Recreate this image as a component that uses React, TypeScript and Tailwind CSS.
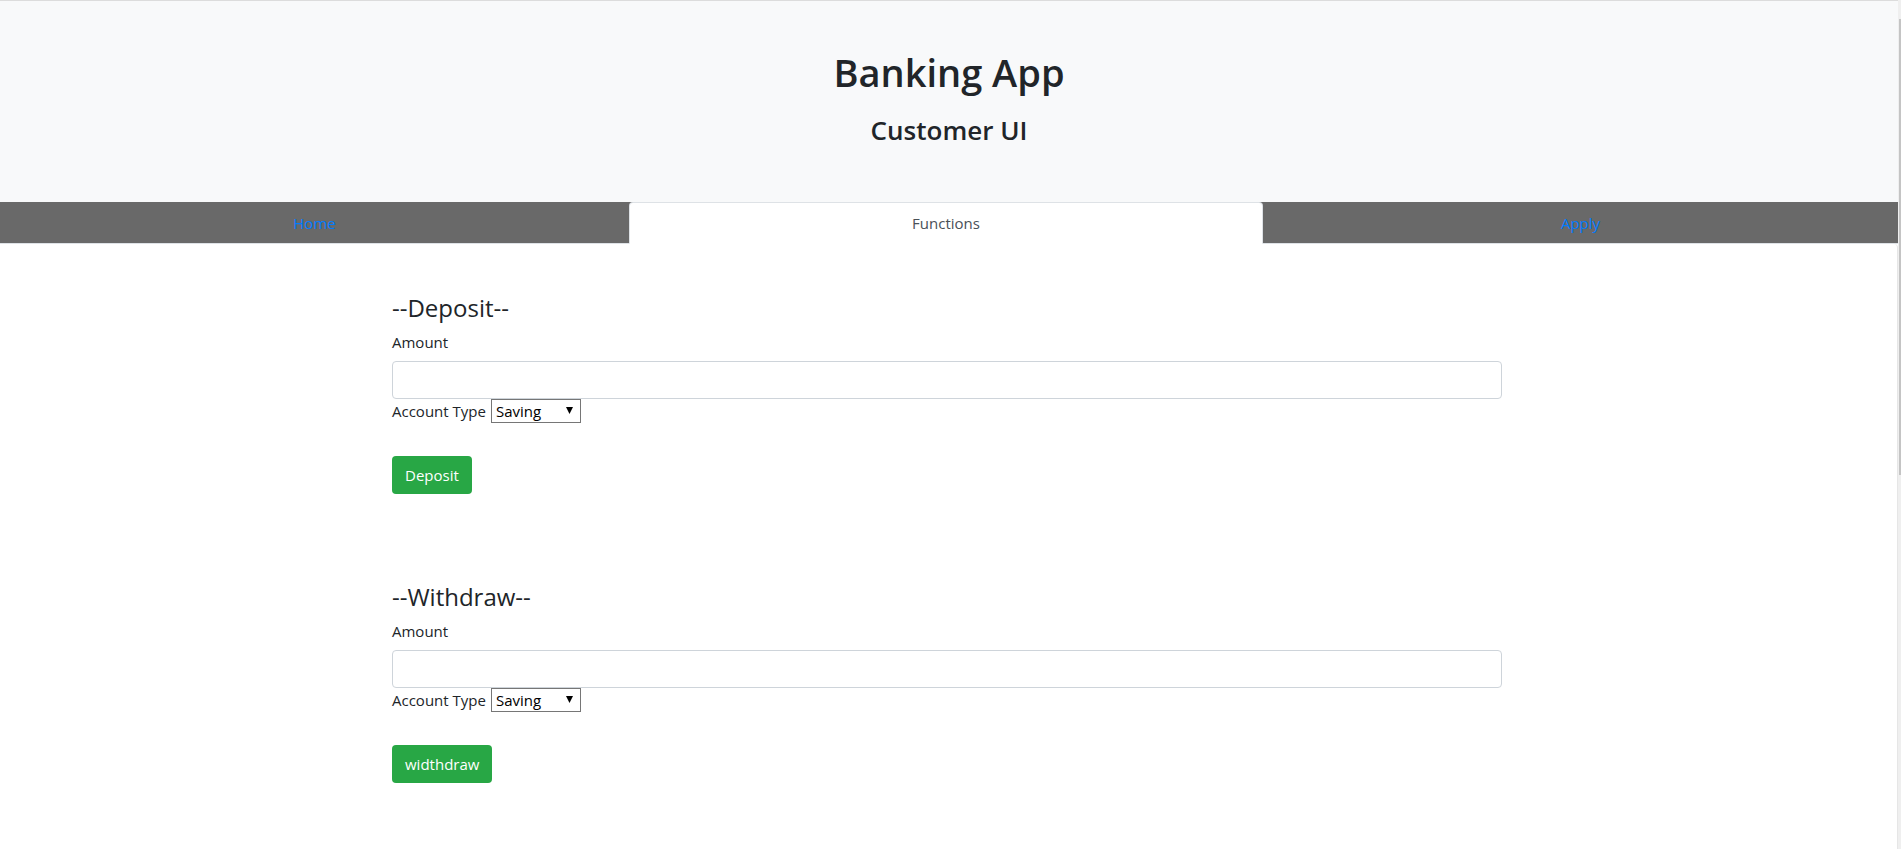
import { useState } from 'react';

type Tab = 'home' | 'functions' | 'apply';

const TABS: { id: Tab; label: string }[] = [
  { id: 'home', label: 'Home' },
  { id: 'functions', label: 'Functions' },
  { id: 'apply', label: 'Apply' },
];

function AccountForm({
  title,
  action,
}: {
  title: string;
  action: string;
}) {
  const [amount, setAmount] = useState('');
  const [type, setType] = useState('Saving');

  return (
    <section className="flex flex-col">
      <h4 className="text-[24px] leading-[29px] font-normal text-[#212529] mb-[8px]">
        {title}
      </h4>
      <label className="text-[15px] leading-[24px] text-[#212529] mb-[7px]">
        Amount
      </label>
      <input
        type="text"
        value={amount}
        onChange={e => setAmount(e.target.value)}
        className="w-full h-[38px] px-3 rounded-[4px] border border-[#ced4da] bg-white text-[16px] text-[#495057] outline-none"
      />
      <div className="flex items-center h-[24px] text-[15px] text-[#212529]">
        <span className="mr-[5px]">Account Type</span>
        <div className="relative">
          <select
            value={type}
            onChange={e => setType(e.target.value)}
            className="appearance-none w-[90px] h-[24px] pl-[4px] border border-[#767676] bg-white text-[15px] leading-[22px] text-black rounded-none outline-none"
          >
            <option>Saving</option>
            <option>Checking</option>
          </select>
          <svg
            className="absolute right-[8px] top-[8px] pointer-events-none"
            width="7"
            height="7"
            viewBox="0 0 8 8"
          >
            <path d="M0 0h8L4 8z" fill="#000" />
          </svg>
        </div>
      </div>
      <div className="mt-[33px]">
        <button
          type="button"
          className="h-[38px] px-[13px] rounded-[4px] bg-[#28a745] text-white text-[15px] hover:bg-[#218838]"
        >
          {action}
        </button>
      </div>
    </section>
  );
}

export default function App() {
  const [tab, setTab] = useState<Tab>('functions');

  return (
    <div
      className="flex min-h-screen bg-white"
      style={{ fontFamily: '"Open Sans", "Noto Sans", sans-serif' }}
    >
      <div className="flex-1 flex flex-col">
        {/* Header */}
        <header className="flex flex-col items-center bg-[#f8f9fa] border-t border-[#dcdcdc] pt-[47px] pb-[55px] text-[#212529]">
          <h1 className="text-[38px] leading-[48px] font-semibold mb-[17px]">
            Banking App
          </h1>
          <h3 className="text-[26px] leading-[34px] font-semibold">
            Customer UI
          </h3>
        </header>

        {/* Tabs */}
        <nav className="grid grid-cols-[629px_634px_1fr] bg-[#696969] border-b border-[#dee2e6]">
          {TABS.map(t =>
            t.id === tab ? (
              <button
                key={t.id}
                type="button"
                className="h-[42px] -mb-px bg-white border border-[#dee2e6] border-b-transparent rounded-t-[4px] text-[15px] text-[#495057]"
              >
                {t.label}
              </button>
            ) : (
              <button
                key={t.id}
                type="button"
                onClick={() => setTab(t.id)}
                className="h-[42px] -mb-px border border-transparent text-[15px] text-[#007bff] hover:underline"
              >
                {t.label}
              </button>
            ),
          )}
        </nav>

        {/* Content */}
        <main className="flex-1 border-r border-[#e6e6e6] rounded-tr-[4px]">
          <div className="ml-[392px] w-[1110px] pt-[49px] flex flex-col gap-[88px] pb-[60px]">
            <AccountForm title="--Deposit--" action="Deposit" />
            <AccountForm title="--Withdraw--" action="widthdraw" />
          </div>
        </main>
      </div>

      {/* Scrollbar strip */}
      <div className="w-[3px] flex flex-col bg-[#efefef]">
        <div className="h-[19px]" />
        <div className="h-[456px] ml-[1px] w-[2px] bg-[#c4c4c4]" />
      </div>
    </div>
  );
}
